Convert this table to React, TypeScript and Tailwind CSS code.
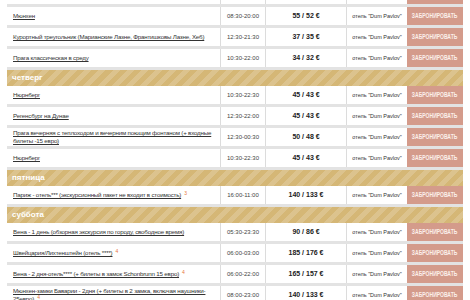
import React from "react";

type Tour = {
  name: string;
  note?: string;
  time: string;
  price: string;
};

type Section =
  | { kind: "day"; title: string }
  | { kind: "tour"; tour: Tour };

const rows: Section[] = [
  { kind: "tour", tour: { name: "Дрезден", time: "08:00-20:00", price: "55 / 52 €" } },
  { kind: "tour", tour: { name: "Мюнхен", time: "08:30-20:00", price: "55 / 52 €" } },
  {
    kind: "tour",
    tour: {
      name: "Курортный треугольник (Марианские Лазне, Франтишковы Лазне, Хеб)",
      time: "12:30-21:30",
      price: "37 / 35 €",
    },
  },
  { kind: "tour", tour: { name: "Прага классическая в среду", time: "10:30-22:00", price: "34 / 32 €" } },
  { kind: "day", title: "четверг" },
  { kind: "tour", tour: { name: "Нюрнберг", time: "10:30-22:30", price: "45 / 43 €" } },
  { kind: "tour", tour: { name: "Регенсбург на Дунае", time: "12:30-22:00", price: "45 / 43 €" } },
  {
    kind: "tour",
    tour: {
      name: "Прага вечерняя с теплоходом и вечерним поющим фонтаном (+ входные билеты -15 евро)",
      time: "12:30-00:30",
      price: "50 / 48 €",
    },
  },
  { kind: "tour", tour: { name: "Нюрнберг", time: "10:30-22:30", price: "45 / 43 €" } },
  { kind: "day", title: "пятница" },
  {
    kind: "tour",
    tour: {
      name: "Париж - отель*** (экскурсионный пакет не входит в стоимость)",
      note: "3",
      time: "16:00-11:00",
      price: "140 / 133 €",
    },
  },
  { kind: "day", title: "суббота" },
  {
    kind: "tour",
    tour: {
      name: "Вена - 1 день (обзорная экскурсия по городу, свободное время)",
      time: "05:30-23:30",
      price: "90 / 86 €",
    },
  },
  {
    kind: "tour",
    tour: { name: "Швейцария/Лихтенштейн (отель ****)", note: "4", time: "06:00-03:00", price: "185 / 176 €" },
  },
  {
    kind: "tour",
    tour: {
      name: "Вена - 2 дня-отель**** (+ билеты в замок Schonbrunn 15 евро)",
      note: "4",
      time: "06:00-22:00",
      price: "165 / 157 €",
    },
  },
  {
    kind: "tour",
    tour: {
      // zero-width space lets the line break after the hyphen, as in the original page
      name: "Мюнхен-замки Баварии - 2дня (+ билеты в 2 замка, включая наушники-\u200B25евро)",
      note: "4",
      time: "08:00-23:00",
      price: "140 / 133 €",
    },
  },
];

const DayRow = ({ title }: { title: string }) => (
  <div className="flex h-[16px] items-center bg-[repeating-linear-gradient(135deg,#d5b776_0px,#d5b776_5px,#dcc38e_5px,#dcc38e_10px)] pl-[5px]">
    <span className="text-[8px] font-bold leading-none text-white">{title}</span>
  </div>
);

const TourRow = ({ tour }: { tour: Tour }) => (
  <div className="flex min-h-[21px] border-b-[3px] border-[#e3e3e3] bg-white">
    <div className="flex w-[214px] shrink-0 items-center border-r border-[#dcdcdc] py-[1px] pl-[6px] pr-[4px]">
      <p className="text-[6.2px] leading-[8px] tracking-[-0.2px] text-[#333]">
        <a href="#" className="underline underline-offset-1">
          {tour.name}
        </a>
        {tour.note && (
          <sup className="ml-[3px] text-[5px] text-[#e8763c]">{tour.note}</sup>
        )}
      </p>
    </div>
    <div className="flex w-[45px] shrink-0 items-center justify-center border-r border-[#dcdcdc] text-[6px] text-[#444]">
      {tour.time}
    </div>
    <div className="flex w-[81px] shrink-0 items-center justify-center border-r border-[#dcdcdc] text-[7px] font-bold text-[#222]">
      {tour.price}
    </div>
    <div className="flex w-[60px] shrink-0 items-center justify-center text-[5.5px] text-[#333]">
      отель "Dum Pavlov"
    </div>
    <div className="flex w-[56px] shrink-0 items-center justify-center overflow-hidden bg-[#d49b8b]">
      <span className="inline-block scale-x-[0.72] whitespace-nowrap text-[7px] font-bold text-[#fbefea]">
        ЗАБРОНИРОВАТЬ
      </span>
    </div>
  </div>
);

export default function App() {
  return (
    <div className="h-[300px] w-[470px] overflow-hidden bg-white font-['Liberation_Sans',Arial,sans-serif]">
      <div className="-mt-[14px] ml-[7px] w-[456px]">
        {rows.map((r, i) =>
          r.kind === "day" ? (
            <DayRow key={i} title={r.title} />
          ) : (
            <TourRow key={i} tour={r.tour} />
          )
        )}
      </div>
    </div>
  );
}
